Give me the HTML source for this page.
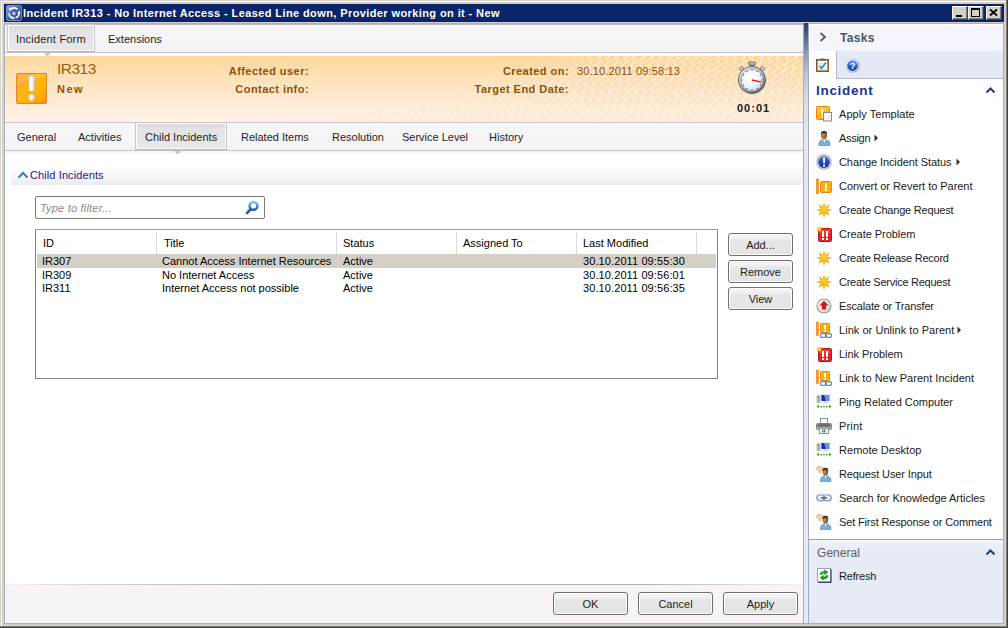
<!DOCTYPE html>
<html><head><meta charset="utf-8">
<style>
*{margin:0;padding:0;box-sizing:border-box}
html,body{width:1008px;height:628px;overflow:hidden;background:#D4D0C8;position:relative;font-family:"Liberation Sans",sans-serif;font-size:11px;color:#000}
.a{position:absolute}
.t{position:absolute;white-space:nowrap;line-height:13px}
.b{font-weight:bold}
.btn{border:1px solid #707070;border-radius:3px;background:linear-gradient(#F6F4F6,#F2F0F2 22%,#E7E7E7 28%,#E4E4E4);box-shadow:inset 0 0 0 1px #fff;text-align:center;line-height:23px;color:#1E1E1E}
</style></head><body>
<!-- window frame -->
<div class="a" style="left:1px;top:1px;width:1005px;height:1px;background:#fff"></div>
<div class="a" style="left:1px;top:1px;width:1px;height:625px;background:#fff"></div>
<div class="a" style="left:0;top:626px;width:1007px;height:1px;background:#808080"></div>
<div class="a" style="left:0;top:627px;width:1008px;height:1px;background:#404040"></div>
<div class="a" style="left:1006px;top:0;width:1px;height:627px;background:#808080"></div>
<div class="a" style="left:1007px;top:0;width:1px;height:628px;background:#404040"></div>

<!-- title bar -->
<div class="a" style="left:4px;top:4px;width:1000px;height:18px;background:#0A246A"></div>
<div class="t b" style="left:23px;top:7px;color:#fff;letter-spacing:0.4px">Incident IR313 - No Internet Access - Leased Line down, Provider working on it - New</div>

<!-- client -->
<div class="a" style="left:4px;top:23px;width:1000px;height:601px;background:#A9B0BC"></div>
<!-- left form -->
<div class="a" style="left:5px;top:24px;width:798px;height:599px;background:#fff"></div>
<!-- tab bar 1 -->
<div class="a" style="left:5px;top:24px;width:798px;height:1px;background:#BDBDC5"></div>
<div class="a" style="left:5px;top:25px;width:798px;height:27px;background:linear-gradient(#F9F9FE,#F6F6F7 3px,#F6F6F6 40%,#F6F2F6)"></div>
<div class="a" style="left:5px;top:52px;width:798px;height:1px;background:#C2C2C8"></div>
<!-- orange header -->
<div class="a" style="left:5px;top:56px;width:798px;height:66px;background:linear-gradient(#FDD89C,#FDDFB0 25%,#FEE6C6 50%,#FEEDD9 75%,#FFF2E6)"></div>
<svg class="a" style="left:5px;top:56px" width="798" height="66" viewBox="0 0 798 66"><defs>
<radialGradient id="mr" gradientUnits="userSpaceOnUse" cx="395" cy="-240" r="700"><stop offset="0.40" stop-color="#fff" stop-opacity="0"/><stop offset="0.45" stop-color="#fff" stop-opacity="1"/><stop offset="1" stop-color="#fff" stop-opacity="1"/></radialGradient>
<linearGradient id="ml" gradientUnits="userSpaceOnUse" x1="280" y1="0" x2="440" y2="0"><stop offset="0" stop-color="#fff" stop-opacity="0"/><stop offset="1" stop-color="#fff" stop-opacity="1"/></linearGradient>
<mask id="mm"><rect width="798" height="66" fill="url(#mr)"/></mask><mask id="mm2"><rect width="798" height="66" fill="url(#ml)"/></mask></defs>
<g mask="url(#mm2)"><rect mask="url(#mm)" width="798" height="66" fill="#F9C080" fill-opacity="0.14"/><path mask="url(#mm)" d="M250.0 66 Q256.0 33 264.0 0 M258.5 66 Q264.5 33 272.5 0 M267.0 66 Q273.0 33 281.0 0 M275.5 66 Q281.5 33 289.5 0 M284.0 66 Q290.0 33 298.0 0 M292.5 66 Q298.5 33 306.5 0 M301.0 66 Q307.0 33 315.0 0 M309.5 66 Q315.5 33 323.5 0 M318.0 66 Q324.0 33 332.0 0 M326.5 66 Q332.5 33 340.5 0 M335.0 66 Q341.0 33 349.0 0 M343.5 66 Q349.5 33 357.5 0 M352.0 66 Q358.0 33 366.0 0 M360.5 66 Q366.5 33 374.5 0 M369.0 66 Q375.0 33 383.0 0 M377.5 66 Q383.5 33 391.5 0 M386.0 66 Q392.0 33 400.0 0 M394.5 66 Q400.5 33 408.5 0 M403.0 66 Q409.0 33 417.0 0 M411.5 66 Q417.5 33 425.5 0 M420.0 66 Q426.0 33 434.0 0 M428.5 66 Q434.5 33 442.5 0 M437.0 66 Q443.0 33 451.0 0 M445.5 66 Q451.5 33 459.5 0 M454.0 66 Q460.0 33 468.0 0 M462.5 66 Q468.5 33 476.5 0 M471.0 66 Q477.0 33 485.0 0 M479.5 66 Q485.5 33 493.5 0 M488.0 66 Q494.0 33 502.0 0 M496.5 66 Q502.5 33 510.5 0 M505.0 66 Q511.0 33 519.0 0 M513.5 66 Q519.5 33 527.5 0 M522.0 66 Q528.0 33 536.0 0 M530.5 66 Q536.5 33 544.5 0 M539.0 66 Q545.0 33 553.0 0 M547.5 66 Q553.5 33 561.5 0 M556.0 66 Q562.0 33 570.0 0 M564.5 66 Q570.5 33 578.5 0 M573.0 66 Q579.0 33 587.0 0 M581.5 66 Q587.5 33 595.5 0 M590.0 66 Q596.0 33 604.0 0 M598.5 66 Q604.5 33 612.5 0 M607.0 66 Q613.0 33 621.0 0 M615.5 66 Q621.5 33 629.5 0 M624.0 66 Q630.0 33 638.0 0 M632.5 66 Q638.5 33 646.5 0 M641.0 66 Q647.0 33 655.0 0 M649.5 66 Q655.5 33 663.5 0 M658.0 66 Q664.0 33 672.0 0 M666.5 66 Q672.5 33 680.5 0 M675.0 66 Q681.0 33 689.0 0 M683.5 66 Q689.5 33 697.5 0 M692.0 66 Q698.0 33 706.0 0 M700.5 66 Q706.5 33 714.5 0 M709.0 66 Q715.0 33 723.0 0 M717.5 66 Q723.5 33 731.5 0 M726.0 66 Q732.0 33 740.0 0 M734.5 66 Q740.5 33 748.5 0 M743.0 66 Q749.0 33 757.0 0 M751.5 66 Q757.5 33 765.5 0 M760.0 66 Q766.0 33 774.0 0 M768.5 66 Q774.5 33 782.5 0 M777.0 66 Q783.0 33 791.0 0 M785.5 66 Q791.5 33 799.5 0 M794.0 66 Q800.0 33 808.0 0 M802.5 66 Q808.5 33 816.5 0 M811.0 66 Q817.0 33 825.0 0 M819.5 66 Q825.5 33 833.5 0 M828.0 66 Q834.0 33 842.0 0 M836.5 66 Q842.5 33 850.5 0 M200.0 66 Q240.0 28 290.0 0 M209.0 66 Q249.0 28 299.0 0 M218.0 66 Q258.0 28 308.0 0 M227.0 66 Q267.0 28 317.0 0 M236.0 66 Q276.0 28 326.0 0 M245.0 66 Q285.0 28 335.0 0 M254.0 66 Q294.0 28 344.0 0 M263.0 66 Q303.0 28 353.0 0 M272.0 66 Q312.0 28 362.0 0 M281.0 66 Q321.0 28 371.0 0 M290.0 66 Q330.0 28 380.0 0 M299.0 66 Q339.0 28 389.0 0 M308.0 66 Q348.0 28 398.0 0 M317.0 66 Q357.0 28 407.0 0 M326.0 66 Q366.0 28 416.0 0 M335.0 66 Q375.0 28 425.0 0 M344.0 66 Q384.0 28 434.0 0 M353.0 66 Q393.0 28 443.0 0 M362.0 66 Q402.0 28 452.0 0 M371.0 66 Q411.0 28 461.0 0 M380.0 66 Q420.0 28 470.0 0 M389.0 66 Q429.0 28 479.0 0 M398.0 66 Q438.0 28 488.0 0 M407.0 66 Q447.0 28 497.0 0 M416.0 66 Q456.0 28 506.0 0 M425.0 66 Q465.0 28 515.0 0 M434.0 66 Q474.0 28 524.0 0 M443.0 66 Q483.0 28 533.0 0 M452.0 66 Q492.0 28 542.0 0 M461.0 66 Q501.0 28 551.0 0 M470.0 66 Q510.0 28 560.0 0 M479.0 66 Q519.0 28 569.0 0 M488.0 66 Q528.0 28 578.0 0 M497.0 66 Q537.0 28 587.0 0 M506.0 66 Q546.0 28 596.0 0 M515.0 66 Q555.0 28 605.0 0 M524.0 66 Q564.0 28 614.0 0 M533.0 66 Q573.0 28 623.0 0 M542.0 66 Q582.0 28 632.0 0 M551.0 66 Q591.0 28 641.0 0 M560.0 66 Q600.0 28 650.0 0 M569.0 66 Q609.0 28 659.0 0 M578.0 66 Q618.0 28 668.0 0 M587.0 66 Q627.0 28 677.0 0 M596.0 66 Q636.0 28 686.0 0 M605.0 66 Q645.0 28 695.0 0 M614.0 66 Q654.0 28 704.0 0 M623.0 66 Q663.0 28 713.0 0 M632.0 66 Q672.0 28 722.0 0 M641.0 66 Q681.0 28 731.0 0 M650.0 66 Q690.0 28 740.0 0 M659.0 66 Q699.0 28 749.0 0 M668.0 66 Q708.0 28 758.0 0 M677.0 66 Q717.0 28 767.0 0 M686.0 66 Q726.0 28 776.0 0 M695.0 66 Q735.0 28 785.0 0 M704.0 66 Q744.0 28 794.0 0 M713.0 66 Q753.0 28 803.0 0 M722.0 66 Q762.0 28 812.0 0 M731.0 66 Q771.0 28 821.0 0 M740.0 66 Q780.0 28 830.0 0 M749.0 66 Q789.0 28 839.0 0 M758.0 66 Q798.0 28 848.0 0 M767.0 66 Q807.0 28 857.0 0 M776.0 66 Q816.0 28 866.0 0 M785.0 66 Q825.0 28 875.0 0 M794.0 66 Q834.0 28 884.0 0 M803.0 66 Q843.0 28 893.0 0 M812.0 66 Q852.0 28 902.0 0 M821.0 66 Q861.0 28 911.0 0 M830.0 66 Q870.0 28 920.0 0 M839.0 66 Q879.0 28 929.0 0 M848.0 66 Q888.0 28 938.0 0 M857.0 66 Q897.0 28 947.0 0 M866.0 66 Q906.0 28 956.0 0 M875.0 66 Q915.0 28 965.0 0 M884.0 66 Q924.0 28 974.0 0 M893.0 66 Q933.0 28 983.0 0 M902.0 66 Q942.0 28 992.0 0 M911.0 66 Q951.0 28 1001.0 0 M920.0 66 Q960.0 28 1010.0 0 M929.0 66 Q969.0 28 1019.0 0 M938.0 66 Q978.0 28 1028.0 0 M947.0 66 Q987.0 28 1037.0 0 M956.0 66 Q996.0 28 1046.0 0 M965.0 66 Q1005.0 28 1055.0 0 M974.0 66 Q1014.0 28 1064.0 0 M983.0 66 Q1023.0 28 1073.0 0 M992.0 66 Q1032.0 28 1082.0 0 M1001.0 66 Q1041.0 28 1091.0 0 M150.0 0 Q180.0 30 205.0 66 M159.0 0 Q189.0 30 214.0 66 M168.0 0 Q198.0 30 223.0 66 M177.0 0 Q207.0 30 232.0 66 M186.0 0 Q216.0 30 241.0 66 M195.0 0 Q225.0 30 250.0 66 M204.0 0 Q234.0 30 259.0 66 M213.0 0 Q243.0 30 268.0 66 M222.0 0 Q252.0 30 277.0 66 M231.0 0 Q261.0 30 286.0 66 M240.0 0 Q270.0 30 295.0 66 M249.0 0 Q279.0 30 304.0 66 M258.0 0 Q288.0 30 313.0 66 M267.0 0 Q297.0 30 322.0 66 M276.0 0 Q306.0 30 331.0 66 M285.0 0 Q315.0 30 340.0 66 M294.0 0 Q324.0 30 349.0 66 M303.0 0 Q333.0 30 358.0 66 M312.0 0 Q342.0 30 367.0 66 M321.0 0 Q351.0 30 376.0 66 M330.0 0 Q360.0 30 385.0 66 M339.0 0 Q369.0 30 394.0 66 M348.0 0 Q378.0 30 403.0 66 M357.0 0 Q387.0 30 412.0 66 M366.0 0 Q396.0 30 421.0 66 M375.0 0 Q405.0 30 430.0 66 M384.0 0 Q414.0 30 439.0 66 M393.0 0 Q423.0 30 448.0 66 M402.0 0 Q432.0 30 457.0 66 M411.0 0 Q441.0 30 466.0 66 M420.0 0 Q450.0 30 475.0 66 M429.0 0 Q459.0 30 484.0 66 M438.0 0 Q468.0 30 493.0 66 M447.0 0 Q477.0 30 502.0 66 M456.0 0 Q486.0 30 511.0 66 M465.0 0 Q495.0 30 520.0 66 M474.0 0 Q504.0 30 529.0 66 M483.0 0 Q513.0 30 538.0 66 M492.0 0 Q522.0 30 547.0 66 M501.0 0 Q531.0 30 556.0 66 M510.0 0 Q540.0 30 565.0 66 M519.0 0 Q549.0 30 574.0 66 M528.0 0 Q558.0 30 583.0 66 M537.0 0 Q567.0 30 592.0 66 M546.0 0 Q576.0 30 601.0 66 M555.0 0 Q585.0 30 610.0 66 M564.0 0 Q594.0 30 619.0 66 M573.0 0 Q603.0 30 628.0 66 M582.0 0 Q612.0 30 637.0 66 M591.0 0 Q621.0 30 646.0 66 M600.0 0 Q630.0 30 655.0 66 M609.0 0 Q639.0 30 664.0 66 M618.0 0 Q648.0 30 673.0 66 M627.0 0 Q657.0 30 682.0 66 M636.0 0 Q666.0 30 691.0 66 M645.0 0 Q675.0 30 700.0 66 M654.0 0 Q684.0 30 709.0 66 M663.0 0 Q693.0 30 718.0 66 M672.0 0 Q702.0 30 727.0 66 M681.0 0 Q711.0 30 736.0 66 M690.0 0 Q720.0 30 745.0 66 M699.0 0 Q729.0 30 754.0 66 M708.0 0 Q738.0 30 763.0 66 M717.0 0 Q747.0 30 772.0 66 M726.0 0 Q756.0 30 781.0 66 M735.0 0 Q765.0 30 790.0 66 M744.0 0 Q774.0 30 799.0 66 M753.0 0 Q783.0 30 808.0 66 M762.0 0 Q792.0 30 817.0 66 M771.0 0 Q801.0 30 826.0 66 M780.0 0 Q810.0 30 835.0 66 M789.0 0 Q819.0 30 844.0 66 M798.0 0 Q828.0 30 853.0 66 M807.0 0 Q837.0 30 862.0 66 M816.0 0 Q846.0 30 871.0 66 M825.0 0 Q855.0 30 880.0 66 M834.0 0 Q864.0 30 889.0 66 M843.0 0 Q873.0 30 898.0 66 M852.0 0 Q882.0 30 907.0 66 M861.0 0 Q891.0 30 916.0 66 M870.0 0 Q900.0 30 925.0 66 M879.0 0 Q909.0 30 934.0 66 M888.0 0 Q918.0 30 943.0 66 M897.0 0 Q927.0 30 952.0 66 M906.0 0 Q936.0 30 961.0 66 M915.0 0 Q945.0 30 970.0 66 M924.0 0 Q954.0 30 979.0 66 M933.0 0 Q963.0 30 988.0 66 M942.0 0 Q972.0 30 997.0 66 M951.0 0 Q981.0 30 1006.0 66" stroke="#fff" stroke-opacity="0.6" stroke-width="0.8" fill="none"/></g></svg>
<div class="a" style="left:5px;top:122px;width:798px;height:1px;background:#C4C4CC"></div>
<!-- tab bar 2 -->
<div class="a" style="left:5px;top:123px;width:798px;height:27px;background:linear-gradient(#F9F9FE,#F6F6F7 3px,#F6F6F6 40%,#F6F2F6)"></div>
<div class="a" style="left:5px;top:150px;width:798px;height:1px;background:#C4C4CC"></div>
<!-- footer -->
<div class="a" style="left:5px;top:584px;width:798px;height:1px;background:linear-gradient(90deg,#F2F0F4,#D8DADE 60px,#AAB0B6 280px,#AAB0B6 630px,#D4D8DC 730px,#EEEEF2)"></div>
<div class="a" style="left:5px;top:585px;width:798px;height:38px;background:#F7F3F7"></div>

<!-- splitter -->
<div class="a" style="left:803px;top:23px;width:6px;height:600px;border-left:1px solid #A4ACBC;border-right:1px solid #A4ACBC;background:linear-gradient(#2C3C60,#4C5E84 12px,#8A9AB8 30px,#B8C4D8 50px,#D6DCEA 75px,#E4E8F6 110px,#E6EAF8)"></div>

<!-- right panel -->
<div class="a" style="left:809px;top:24px;width:194px;height:599px;background:#fff"></div>
<div class="a" style="left:809px;top:24px;width:194px;height:27px;background:#F5F6FD;box-shadow:inset 1px 1px 0 #fff"></div>
<div class="a" style="left:836px;top:51px;width:167px;height:28px;background:#E4E9F5;border-left:1px solid #B4B8C4;border-bottom:1px solid #B4B8C4"></div>
<div class="a" style="left:809px;top:539px;width:194px;height:1px;background:#A0A0A8"></div>
<div class="a" style="left:809px;top:540px;width:194px;height:83px;background:linear-gradient(#F2F4FA,#E8ECF7 8px,#E6EAF5)"></div>


<!-- title icon -->
<svg class="a" style="left:6px;top:5px" width="16" height="16" viewBox="0 0 16 16">
<defs><linearGradient id="tig" x1="0" y1="0" x2="1" y2="1"><stop offset="0" stop-color="#9AB0E4"/><stop offset="0.45" stop-color="#4A62B0"/><stop offset="1" stop-color="#2A3C8A"/></linearGradient></defs>
<rect x="0.5" y="0.5" width="15" height="15" rx="1.5" fill="url(#tig)" stroke="#7088C8"/>
<path d="M4.2 4.6 A5 5 0 0 1 11.6 4.4" stroke="#fff" stroke-width="1.6" fill="none"/>
<path d="M3.2 2.8 L6.4 3.2 L3.6 6.2Z" fill="#fff"/>
<path d="M13 7.2 A5 5 0 0 1 9.6 12.8" stroke="#fff" stroke-width="1.6" fill="none"/>
<path d="M13.8 5.6 L14 9 L11.4 7.4Z" fill="#fff"/>
<path d="M7.4 13 A5 5 0 0 1 3 8.2" stroke="#fff" stroke-width="1.6" fill="none"/>
<path d="M5.6 14 L9 13.6 L6.6 11.2Z" fill="#fff"/>
<circle cx="8" cy="8.4" r="1.6" fill="#B8C8F0"/>
</svg>
<!-- title buttons -->
<div class="a" style="left:952px;top:6px;width:16px;height:14px;background:#D4D0C8;border-top:1px solid #fff;border-left:1px solid #fff;border-right:1px solid #404040;border-bottom:1px solid #404040;box-shadow:inset -1px -1px 0 #808080"></div>
<div class="a" style="left:956px;top:15px;width:6px;height:2px;background:#000"></div>
<div class="a" style="left:968px;top:6px;width:16px;height:14px;background:#D4D0C8;border-top:1px solid #fff;border-left:1px solid #fff;border-right:1px solid #404040;border-bottom:1px solid #404040;box-shadow:inset -1px -1px 0 #808080"></div>
<div class="a" style="left:971px;top:8px;width:9px;height:9px;border:1px solid #000;border-top-width:2px"></div>
<div class="a" style="left:986px;top:6px;width:16px;height:14px;background:#D4D0C8;border-top:1px solid #fff;border-left:1px solid #fff;border-right:1px solid #404040;border-bottom:1px solid #404040;box-shadow:inset -1px -1px 0 #808080"></div>
<svg class="a" style="left:986px;top:6px" width="16" height="14" viewBox="0 0 16 14"><path d="M4 3.5 L11 9.5 M11 3.5 L4 9.5" stroke="#000" stroke-width="1.7"/></svg>

<!-- tab bar 1 -->
<div class="a" style="left:7px;top:24px;width:88px;height:28px;border:1px solid #C6C6CC;border-bottom-color:#B8B8BE;background:linear-gradient(#DADADC,#E3E3E5 25%,#E8E8E8);box-shadow:inset 0 0 0 1px #fff"></div>
<svg class="a" style="left:43px;top:52px" width="9" height="5"><path d="M0 0 L9 0 L4.5 4.5Z" fill="#C4C4CC"/></svg>
<div class="t" style="left:16px;top:33px;color:#1E1E1E;letter-spacing:0.2px">Incident Form</div>
<div class="t" style="left:108px;top:33px;color:#1E1E1E">Extensions</div>

<!-- header content -->
<svg class="a" style="left:16px;top:73px" width="31" height="31" viewBox="0 0 31 31">
<defs><linearGradient id="og" x1="0" y1="0" x2="1" y2="1"><stop offset="0" stop-color="#FF9048"/><stop offset="0.4" stop-color="#FFB414"/><stop offset="0.7" stop-color="#FFB400"/><stop offset="1" stop-color="#FF8C00"/></linearGradient>
<linearGradient id="ex" x1="0" y1="0" x2="1" y2="0"><stop offset="0" stop-color="#D8D8D8"/><stop offset="0.4" stop-color="#FFFFFF"/><stop offset="1" stop-color="#CFCFCF"/></linearGradient></defs>
<rect x="0.5" y="0.5" width="30" height="30" rx="1" fill="url(#og)" stroke="#D8882A"/>
<path d="M1 13 Q12 5 30 4 L30 1 L1 1Z" fill="#FFE080" opacity="0.3"/>
<path d="M12 2.8 L19.2 2.8 L18.2 18.6 L13 18.6Z" fill="url(#ex)" stroke="#C8A060" stroke-width="0.5"/>
<circle cx="15.6" cy="24.4" r="3.4" fill="url(#ex)" stroke="#C8A060" stroke-width="0.5"/>
</svg>
<div class="t" style="left:57px;top:61px;font-size:15.5px;line-height:16px;color:#9A6018;letter-spacing:-0.5px">IR313</div>
<div class="t b" style="left:57px;top:83px;color:#8A5210;letter-spacing:1.5px">New</div>
<div class="t b" style="left:200px;width:109px;text-align:right;top:65px;color:#8A5210;letter-spacing:0.45px">Affected user:</div>
<div class="t b" style="left:200px;width:109px;text-align:right;top:83px;color:#8A5210;letter-spacing:0.45px">Contact info:</div>
<div class="t b" style="left:440px;width:129px;text-align:right;top:65px;color:#8A5210;letter-spacing:0.45px">Created on:</div>
<div class="t b" style="left:440px;width:129px;text-align:right;top:83px;color:#8A5210;letter-spacing:0.45px">Target End Date:</div>
<div class="t" style="left:577px;top:65px;color:#8A5210;letter-spacing:0.15px">30.10.2011 09:58:13</div>
<!-- stopwatch -->
<svg class="a" style="left:736px;top:61px" width="32" height="34" viewBox="0 0 32 34">
<defs><radialGradient id="face" cx="0.35" cy="0.3" r="0.8"><stop offset="0" stop-color="#FFFFFF"/><stop offset="0.6" stop-color="#EEF4FA"/><stop offset="1" stop-color="#C4D6E8"/></radialGradient>
<linearGradient id="ring" x1="0.2" y1="0" x2="0.8" y2="1"><stop offset="0" stop-color="#F4F4F4"/><stop offset="0.5" stop-color="#B0B0B0"/><stop offset="1" stop-color="#5A5A5A"/></linearGradient></defs>
<rect x="14" y="3.5" width="4" height="3" fill="#9A9A9A" stroke="#505050" stroke-width="0.6"/>
<rect x="12.5" y="1" width="7" height="3" rx="1" fill="#B8B8B8" stroke="#505050" stroke-width="0.7"/>
<rect x="3.5" y="6" width="4" height="3" rx="0.8" transform="rotate(-45 5.5 7.5)" fill="#C8C8C8" stroke="#505050" stroke-width="0.6"/>
<rect x="24.5" y="6" width="4" height="3" rx="0.8" transform="rotate(45 26.5 7.5)" fill="#C8C8C8" stroke="#505050" stroke-width="0.6"/>
<circle cx="16" cy="19" r="13.6" fill="url(#ring)" stroke="#4A4A4A" stroke-width="0.8"/>
<circle cx="16" cy="19" r="11.2" fill="url(#face)" stroke="#7A8A98" stroke-width="0.7"/>
<path d="M16.00 9.80 L16.00 8.20 M20.60 11.03 L21.40 9.65 M23.97 14.40 L25.35 13.60 M25.20 19.00 L26.80 19.00 M23.97 23.60 L25.35 24.40 M20.60 26.97 L21.40 28.35 M16.00 28.20 L16.00 29.80 M11.40 26.97 L10.60 28.35 M8.03 23.60 L6.65 24.40 M6.80 19.00 L5.20 19.00 M8.03 14.40 L6.65 13.60 M11.40 11.03 L10.60 9.65" stroke="#5A6A7A" stroke-width="1.1"/>
<path d="M16 19 L25.5 21.2" stroke="#E01818" stroke-width="1.3"/>
</svg>
<div class="t b" style="left:737px;top:102px;color:#202020;letter-spacing:1px">00:01</div>

<!-- tab bar 2 -->
<div class="a" style="left:135px;top:122px;width:92px;height:28px;border:1px solid #C6C6CC;border-bottom-color:#B8B8BE;background:linear-gradient(#DADADC,#E3E3E5 25%,#E8E8E8);box-shadow:inset 0 0 0 1px #fff"></div>
<div class="t" style="left:17px;top:131px;color:#1E1E1E">General</div>
<div class="t" style="left:78px;top:131px;color:#1E1E1E">Activities</div>
<div class="t" style="left:145px;top:131px;color:#1E1E1E">Child Incidents</div>
<div class="t" style="left:241px;top:131px;color:#1E1E1E">Related Items</div>
<div class="t" style="left:332px;top:131px;color:#1E1E1E">Resolution</div>
<div class="t" style="left:402px;top:131px;color:#1E1E1E">Service Level</div>
<div class="t" style="left:489px;top:131px;color:#1E1E1E">History</div>

<!-- section header -->
<div class="a" style="left:5px;top:151px;width:798px;height:3px;background:linear-gradient(#F6F2F6,#F8F6F8 66%,#fff)"></div>
<div class="a" style="left:11px;top:169px;width:792px;height:16px;background:linear-gradient(#FBFAFC,#F5F3F7 70%,#ECEAF0)"></div>
<svg class="a" style="left:17px;top:171px" width="12" height="8"><path d="M1.5 6.5 L6 2 L10.5 6.5" stroke="#3A7DB5" stroke-width="2" fill="none"/></svg>
<div class="t" style="left:30px;top:169px;color:#1A1A88;letter-spacing:0.1px">Child Incidents</div>

<svg class="a" style="left:173px;top:150px" width="9" height="5"><path d="M0 0 L9 0 L4.5 4.5Z" fill="#C4C4CC"/></svg>
<!-- filter -->
<div class="a" style="left:35px;top:196px;width:230px;height:23px;border:1px solid #7A7A7A;border-radius:2px;background:#fff"></div>
<div class="t" style="left:40px;top:202px;color:#8A8A8A;font-style:italic;letter-spacing:0.2px">Type to filter...</div>
<svg class="a" style="left:244px;top:199px" width="16" height="16" viewBox="0 0 16 16">
<defs><linearGradient id="mg" x1="0" y1="0" x2="0" y2="1"><stop offset="0" stop-color="#7CC8F0"/><stop offset="1" stop-color="#2458B4"/></linearGradient></defs>
<path d="M7 10 L3 14" stroke="#2E5CAA" stroke-width="2.6" stroke-linecap="round"/>
<circle cx="9.5" cy="6.9" r="3.9" fill="none" stroke="url(#mg)" stroke-width="2.6"/>
</svg>

<!-- list -->
<div class="a" style="left:35px;top:229px;width:683px;height:150px;border:1px solid #828282;border-top-color:#A0A0A0;border-radius:1px;background:#fff"></div>
<div class="a" style="left:156px;top:232px;width:1px;height:22px;background:#DCDCDC"></div>
<div class="a" style="left:336px;top:232px;width:1px;height:22px;background:#DCDCDC"></div>
<div class="a" style="left:456px;top:232px;width:1px;height:22px;background:#DCDCDC"></div>
<div class="a" style="left:576px;top:232px;width:1px;height:22px;background:#DCDCDC"></div>
<div class="a" style="left:696px;top:232px;width:1px;height:22px;background:#DCDCDC"></div>
<div class="a" style="left:37px;top:254px;width:679px;height:14px;background:#D4D0C8"></div>
<div class="t" style="left:43px;top:237px">ID</div>
<div class="t" style="left:164px;top:237px">Title</div>
<div class="t" style="left:343px;top:237px">Status</div>
<div class="t" style="left:463px;top:237px">Assigned To</div>
<div class="t" style="left:583px;top:237px">Last Modified</div>
<div class="t" style="left:42px;top:255px">IR307</div>
<div class="t" style="left:162px;top:255px">Cannot Access Internet Resources</div>
<div class="t" style="left:343px;top:255px">Active</div>
<div class="t" style="left:583px;top:255px;letter-spacing:0.1px">30.10.2011 09:55:30</div>
<div class="t" style="left:42px;top:269px">IR309</div>
<div class="t" style="left:162px;top:269px">No Internet Access</div>
<div class="t" style="left:343px;top:269px">Active</div>
<div class="t" style="left:583px;top:269px;letter-spacing:0.1px">30.10.2011 09:56:01</div>
<div class="t" style="left:42px;top:282px">IR311</div>
<div class="t" style="left:162px;top:282px">Internet Access not possible</div>
<div class="t" style="left:343px;top:282px">Active</div>
<div class="t" style="left:583px;top:282px;letter-spacing:0.1px">30.10.2011 09:56:35</div>

<!-- side buttons -->
<div class="a btn" style="left:728px;top:233px;width:65px;height:23px">Add...</div>
<div class="a btn" style="left:728px;top:260px;width:65px;height:23px">Remove</div>
<div class="a btn" style="left:728px;top:287px;width:65px;height:23px">View</div>

<!-- footer buttons -->
<div class="a btn" style="left:553px;top:592px;width:75px;height:23px">OK</div>
<div class="a btn" style="left:638px;top:592px;width:75px;height:23px">Cancel</div>
<div class="a btn" style="left:723px;top:592px;width:75px;height:23px">Apply</div>

<!-- right panel content -->
<svg class="a" style="left:819px;top:32px" width="8" height="10"><path d="M1.5 1 L6 5 L1.5 9" stroke="#505A6E" stroke-width="1.8" fill="none"/></svg>
<div class="t b" style="left:840px;top:32px;font-size:12px;color:#4A5468;letter-spacing:0.3px">Tasks</div>

<!-- tasks tabs -->
<svg class="a" style="left:816px;top:58px" width="13" height="14" viewBox="0 0 13 14">
<rect x="0.8" y="1.8" width="11.4" height="11.4" fill="#fff" stroke="#8A5A28" stroke-width="1.6"/>
<rect x="4" y="0.5" width="5" height="2.5" rx="1" fill="#707070"/>
<g stroke="#C8D8E8" stroke-width="0.8"><path d="M2.5 5.5 H10.5 M2.5 7.5 H10.5 M2.5 9.5 H10.5 M2.5 11.5 H10.5"/></g>
<path d="M3.5 8 L5.5 10.5 L10 4.5" stroke="#2A8AD8" stroke-width="1.6" fill="none"/>
</svg>
<svg class="a" style="left:845px;top:58px" width="15" height="15" viewBox="0 0 15 15">
<defs><linearGradient id="hq" x1="0" y1="0" x2="0" y2="1"><stop offset="0" stop-color="#7AA6F4"/><stop offset="0.5" stop-color="#2A62DA"/><stop offset="1" stop-color="#1038B0"/></linearGradient>
<linearGradient id="hr" x1="0" y1="0" x2="1" y2="1"><stop offset="0" stop-color="#E8EEF8"/><stop offset="1" stop-color="#8A9CC0"/></linearGradient></defs>
<circle cx="7.5" cy="7.5" r="7.3" fill="url(#hr)"/>
<circle cx="7.5" cy="7.5" r="6.1" fill="#fff"/>
<circle cx="7.5" cy="7.5" r="5.4" fill="url(#hq)"/>
<text x="7.6" y="11.3" font-family="Liberation Sans" font-weight="bold" font-size="9.5" fill="#fff" text-anchor="middle">?</text>
</svg>
<div class="t b" style="left:816px;top:84px;font-size:13.5px;color:#163592;letter-spacing:0.7px">Incident</div>
<svg class="a" style="left:985px;top:86px" width="11" height="8"><path d="M1.5 6.5 L5.5 2.5 L9.5 6.5" stroke="#1C3A98" stroke-width="2" fill="none"/></svg>
<svg class="a" style="left:816px;top:106px" width="16" height="16" viewBox="0 0 16 16"><rect x="0.5" y="0.5" width="13" height="13" rx="1" fill="#FFB000" stroke="#E08A10"/><path d="M1 1 H13 V5 Q6 4 1 9Z" fill="#FFD060" opacity="0.6"/><rect x="5.6" y="3" width="1.8" height="6" fill="#fff"/><rect x="5.6" y="10" width="1.8" height="1.8" fill="#fff"/><rect x="7.5" y="6.5" width="8" height="8.5" fill="#F2F2F2" stroke="#8A8A8A"/><rect x="8.5" y="7.5" width="6" height="2" fill="#fff"/></svg>
<div class="t" style="left:839px;top:108px;color:#1A1A1A;letter-spacing:0.05px">Apply Template</div>
<svg class="a" style="left:816px;top:130px" width="16" height="16" viewBox="0 0 16 16"><path d="M2.8 15.6 Q2.2 9.6 8.4 9.2 Q14.6 9.6 14 15.6Z" fill="#7AB0DE" stroke="#5A8CC0" stroke-width="0.7"/><path d="M5 11 Q8.4 9.6 12 11 Q8.4 10.5 5 11Z" fill="#B8D8F4"/><path d="M7.2 9.4 L8.4 12.6 L9.6 9.4Z" fill="#fff"/><ellipse cx="8" cy="5.2" rx="3" ry="3.8" fill="#9A5A28"/><ellipse cx="7.3" cy="5.6" rx="1.5" ry="2.2" fill="#C08050"/><path d="M4.9 4.6 Q4.8 0.8 8 1 Q11.2 0.8 11.1 4.6 Q10.4 2.6 8 2.8 Q5.6 2.6 4.9 4.6Z" fill="#2A2A2A"/></svg>
<div class="t" style="left:839px;top:132px;color:#1A1A1A;letter-spacing:-0.3px">Assign</div>
<svg class="a" style="left:874px;top:134px" width="5" height="8"><path d="M0.5 0.5 L4 4 L0.5 7.5Z" fill="#303030"/></svg>
<svg class="a" style="left:816px;top:154px" width="16" height="16" viewBox="0 0 16 16"><defs><linearGradient id="stg" x1="0" y1="0" x2="0" y2="1"><stop offset="0" stop-color="#5A7AE0"/><stop offset="0.5" stop-color="#2446C0"/><stop offset="1" stop-color="#1A2E98"/></linearGradient></defs><circle cx="8" cy="8" r="7.7" fill="#A4A4A8"/><circle cx="8" cy="8" r="6.7" fill="#F4F4F4"/><circle cx="8" cy="8" r="5.9" fill="url(#stg)"/><path d="M7 3.4 H9.1 L8.8 9.6 H7.3Z" fill="#fff"/><rect x="7.05" y="10.7" width="2" height="2" fill="#fff"/></svg>
<div class="t" style="left:839px;top:156px;color:#1A1A1A;letter-spacing:-0.09px">Change Incident Status</div>
<svg class="a" style="left:956px;top:158px" width="5" height="8"><path d="M0.5 0.5 L4 4 L0.5 7.5Z" fill="#303030"/></svg>
<svg class="a" style="left:816px;top:178px" width="16" height="16" viewBox="0 0 16 16"><rect x="0.5" y="1" width="2" height="15" fill="#FF9E10" stroke="#E07A00" stroke-width="0.6"/><rect x="4.5" y="3.5" width="11" height="11" rx="1" fill="#FFB000" stroke="#E08A10"/><rect x="9" y="5.5" width="2" height="5" fill="#fff"/><rect x="9" y="11.3" width="2" height="1.8" fill="#fff"/></svg>
<div class="t" style="left:839px;top:180px;color:#1A1A1A;letter-spacing:-0.04px">Convert or Revert to Parent</div>
<svg class="a" style="left:816px;top:202px" width="16" height="16" viewBox="0 0 16 16"><defs><radialGradient id="sg0" cx="0.5" cy="0.45" r="0.5"><stop offset="0" stop-color="#FFE060"/><stop offset="0.45" stop-color="#FFB400"/><stop offset="1" stop-color="#F08800"/></radialGradient></defs><polygon points="8.00,0.00 9.34,4.77 13.66,2.34 11.23,6.66 16.00,8.00 11.23,9.34 13.66,13.66 9.34,11.23 8.00,16.00 6.66,11.23 2.34,13.66 4.77,9.34 0.00,8.00 4.77,6.66 2.34,2.34 6.66,4.77" fill="url(#sg0)"/></svg>
<div class="t" style="left:839px;top:204px;color:#1A1A1A;letter-spacing:-0.2px">Create Change Request</div>
<svg class="a" style="left:816px;top:226px" width="16" height="16" viewBox="0 0 16 16"><rect x="2.5" y="2.5" width="13" height="13" rx="1" fill="#E02828" stroke="#B01818"/><rect x="3" y="3" width="12" height="5" fill="#F05050" opacity="0.5"/><rect x="6" y="5" width="2" height="6" fill="#fff"/><rect x="6" y="12" width="2" height="2" fill="#fff"/><rect x="10" y="5" width="2" height="6" fill="#fff"/><rect x="10" y="12" width="2" height="2" fill="#fff"/><polygon points="3.20,-0.30 3.81,1.72 5.67,0.73 4.68,2.59 6.70,3.20 4.68,3.81 5.67,5.67 3.81,4.68 3.20,6.70 2.59,4.68 0.73,5.67 1.72,3.81 -0.30,3.20 1.72,2.59 0.73,0.73 2.59,1.72" fill="#FFB814"/><circle cx="3.2" cy="3.2" r="1" fill="#FFE070"/></svg>
<div class="t" style="left:839px;top:228px;color:#1A1A1A;letter-spacing:-0.04px">Create Problem</div>
<svg class="a" style="left:816px;top:250px" width="16" height="16" viewBox="0 0 16 16"><defs><radialGradient id="sg1" cx="0.5" cy="0.45" r="0.5"><stop offset="0" stop-color="#FFE060"/><stop offset="0.45" stop-color="#FFB400"/><stop offset="1" stop-color="#F08800"/></radialGradient></defs><polygon points="8.00,0.00 9.34,4.77 13.66,2.34 11.23,6.66 16.00,8.00 11.23,9.34 13.66,13.66 9.34,11.23 8.00,16.00 6.66,11.23 2.34,13.66 4.77,9.34 0.00,8.00 4.77,6.66 2.34,2.34 6.66,4.77" fill="url(#sg1)"/></svg>
<div class="t" style="left:839px;top:252px;color:#1A1A1A;letter-spacing:-0.25px">Create Release Record</div>
<svg class="a" style="left:816px;top:274px" width="16" height="16" viewBox="0 0 16 16"><defs><radialGradient id="sg2" cx="0.5" cy="0.45" r="0.5"><stop offset="0" stop-color="#FFE060"/><stop offset="0.45" stop-color="#FFB400"/><stop offset="1" stop-color="#F08800"/></radialGradient></defs><polygon points="8.00,0.00 9.34,4.77 13.66,2.34 11.23,6.66 16.00,8.00 11.23,9.34 13.66,13.66 9.34,11.23 8.00,16.00 6.66,11.23 2.34,13.66 4.77,9.34 0.00,8.00 4.77,6.66 2.34,2.34 6.66,4.77" fill="url(#sg2)"/></svg>
<div class="t" style="left:839px;top:276px;color:#1A1A1A;letter-spacing:-0.25px">Create Service Request</div>
<svg class="a" style="left:816px;top:298px" width="16" height="16" viewBox="0 0 16 16"><defs><linearGradient id="eg" x1="0" y1="0" x2="1" y2="1"><stop offset="0" stop-color="#FFFFFF"/><stop offset="1" stop-color="#D0D0D0"/></linearGradient></defs><circle cx="8" cy="8" r="7.6" fill="#9C9C9C"/><circle cx="8" cy="8" r="6.4" fill="url(#eg)"/><path d="M8 2.8 L12.6 7.6 H10.1 V11.6 H5.9 V7.6 H3.4Z" fill="#D01818"/></svg>
<div class="t" style="left:839px;top:300px;color:#1A1A1A;letter-spacing:-0.18px">Escalate or Transfer</div>
<svg class="a" style="left:816px;top:322px" width="16" height="16" viewBox="0 0 16 16"><rect x="0.5" y="0.5" width="2" height="13" fill="#FF9E10" stroke="#E07A00" stroke-width="0.6"/><rect x="4.5" y="1.5" width="9" height="9" rx="1" fill="#FFB000" stroke="#E08A10"/><rect x="8" y="3" width="2" height="4" fill="#fff"/><rect x="8" y="8" width="2" height="1.5" fill="#fff"/><rect x="4.5" y="11.5" width="6" height="4" rx="2" fill="none" stroke="#6A8CB8" stroke-width="1.3"/><rect x="9.5" y="11.5" width="6" height="4" rx="2" fill="none" stroke="#6A8CB8" stroke-width="1.3"/></svg>
<div class="t" style="left:839px;top:324px;color:#1A1A1A;letter-spacing:0.04px">Link or Unlink to Parent</div>
<svg class="a" style="left:957px;top:326px" width="5" height="8"><path d="M0.5 0.5 L4 4 L0.5 7.5Z" fill="#303030"/></svg>
<svg class="a" style="left:816px;top:346px" width="16" height="16" viewBox="0 0 16 16"><rect x="2.5" y="2.5" width="13" height="13" rx="1" fill="#E02828" stroke="#B01818"/><rect x="3" y="3" width="12" height="5" fill="#F05050" opacity="0.5"/><rect x="6" y="5" width="2" height="6" fill="#fff"/><rect x="6" y="12" width="2" height="2" fill="#fff"/><rect x="10" y="5" width="2" height="6" fill="#fff"/><rect x="10" y="12" width="2" height="2" fill="#fff"/><polygon points="3.20,-0.30 3.81,1.72 5.67,0.73 4.68,2.59 6.70,3.20 4.68,3.81 5.67,5.67 3.81,4.68 3.20,6.70 2.59,4.68 0.73,5.67 1.72,3.81 -0.30,3.20 1.72,2.59 0.73,0.73 2.59,1.72" fill="#FFB814"/><circle cx="3.2" cy="3.2" r="1" fill="#FFE070"/></svg>
<div class="t" style="left:839px;top:348px;color:#1A1A1A;letter-spacing:-0.05px">Link Problem</div>
<svg class="a" style="left:816px;top:370px" width="16" height="16" viewBox="0 0 16 16"><rect x="0.5" y="0.5" width="2" height="13" fill="#FF9E10" stroke="#E07A00" stroke-width="0.6"/><rect x="4.5" y="1.5" width="9" height="9" rx="1" fill="#FFB000" stroke="#E08A10"/><rect x="8" y="3" width="2" height="4" fill="#fff"/><rect x="8" y="8" width="2" height="1.5" fill="#fff"/><rect x="4.5" y="11.5" width="6" height="4" rx="2" fill="none" stroke="#6A8CB8" stroke-width="1.3"/><rect x="9.5" y="11.5" width="6" height="4" rx="2" fill="none" stroke="#6A8CB8" stroke-width="1.3"/></svg>
<div class="t" style="left:839px;top:372px;color:#1A1A1A;letter-spacing:0.02px">Link to New Parent Incident</div>
<svg class="a" style="left:816px;top:394px" width="16" height="16" viewBox="0 0 16 16"><rect x="1" y="1.5" width="3" height="7" rx="1" fill="#B8B8B8" stroke="#888" stroke-width="0.5"/><rect x="1.6" y="2.6" width="1.8" height="1" fill="#30C030"/><rect x="4.8" y="0.5" width="9" height="7" fill="#E0E0E0"/><rect x="5.4" y="1" width="7.8" height="6" fill="#1030C0"/><path d="M8 1 L13.2 1 L13.2 7 L10 7Z" fill="#6A90E0"/><rect x="7.5" y="8" width="4" height="1" fill="#C0C0C0"/><path d="M0.5 12.5 L3 10.5 V14.5Z M15.5 12.5 L13 10.5 V14.5Z" fill="#20C020"/><g fill="#20C020"><rect x="4.5" y="12" width="1.5" height="1.5"/><rect x="7.2" y="12" width="1.5" height="1.5"/><rect x="10" y="12" width="1.5" height="1.5"/></g></svg>
<div class="t" style="left:839px;top:396px;color:#1A1A1A;letter-spacing:-0.02px">Ping Related Computer</div>
<svg class="a" style="left:816px;top:418px" width="16" height="16" viewBox="0 0 16 16"><rect x="4.5" y="0.5" width="7" height="5" fill="#fff" stroke="#909090"/><rect x="0.5" y="5.5" width="15" height="6" rx="1" fill="#B8B8B8" stroke="#808080"/><rect x="1.5" y="6" width="13" height="3" fill="#707070"/><rect x="3.5" y="10.5" width="9" height="5" fill="#fff" stroke="#909090"/><rect x="6" y="11.5" width="1.5" height="3" fill="#3080D0"/><rect x="8" y="11.5" width="1.5" height="3" fill="#30A040"/></svg>
<div class="t" style="left:839px;top:420px;color:#1A1A1A;letter-spacing:0.15px">Print</div>
<svg class="a" style="left:816px;top:442px" width="16" height="16" viewBox="0 0 16 16"><rect x="1" y="1.5" width="3" height="7" rx="1" fill="#B8B8B8" stroke="#888" stroke-width="0.5"/><rect x="1.6" y="2.6" width="1.8" height="1" fill="#30C030"/><rect x="4.8" y="0.5" width="9" height="7" fill="#E0E0E0"/><rect x="5.4" y="1" width="7.8" height="6" fill="#1030C0"/><path d="M8 1 L13.2 1 L13.2 7 L10 7Z" fill="#6A90E0"/><rect x="7.5" y="8" width="4" height="1" fill="#C0C0C0"/><path d="M0.5 12.5 L3 10.5 V14.5Z M15.5 12.5 L13 10.5 V14.5Z" fill="#20C020"/><g fill="#20C020"><rect x="4.5" y="12" width="1.5" height="1.5"/><rect x="7.2" y="12" width="1.5" height="1.5"/><rect x="10" y="12" width="1.5" height="1.5"/></g></svg>
<div class="t" style="left:839px;top:444px;color:#1A1A1A;letter-spacing:0.04px">Remote Desktop</div>
<svg class="a" style="left:816px;top:466px" width="16" height="16" viewBox="0 0 16 16"><path d="M0.5 2.5 Q0.5 0.5 4 0.5 Q7.5 0.5 7.5 2.5 Q7.5 4.5 4.5 4.5 L4 7.5 L3 4.5 Q0.5 4.5 0.5 2.5Z" fill="#F6D890" stroke="#C8A050" stroke-width="0.6"/><path d="M4.5 15.6 Q4 10 9.6 9.6 Q15.4 10 15 15.6Z" fill="#7AB0DE" stroke="#5A8CC0" stroke-width="0.7"/><path d="M8.6 9.8 L9.6 12.6 L10.6 9.8Z" fill="#fff"/><ellipse cx="9.4" cy="5.8" rx="2.8" ry="3.6" fill="#9A5A28"/><ellipse cx="8.8" cy="6.2" rx="1.4" ry="2" fill="#C08050"/><path d="M6.5 5.2 Q6.4 1.6 9.4 1.8 Q12.4 1.6 12.3 5.2 Q11.6 3.4 9.4 3.6 Q7.2 3.4 6.5 5.2Z" fill="#2A2A2A"/></svg>
<div class="t" style="left:839px;top:468px;color:#1A1A1A;letter-spacing:-0.12px">Request User Input</div>
<svg class="a" style="left:816px;top:490px" width="16" height="16" viewBox="0 0 16 16"><rect x="1" y="5.2" width="7.6" height="5.4" rx="2.7" fill="none" stroke="#8AA2C4" stroke-width="1.7"/><rect x="7.4" y="5.2" width="7.6" height="5.4" rx="2.7" fill="none" stroke="#8AA2C4" stroke-width="1.7"/><path d="M1.6 6.6 Q4 4.6 7 5.4 M8 5.4 Q11 4.6 14.4 6.6" stroke="#D8E4F4" stroke-width="0.7" fill="none"/><path d="M4.6 7.9 H11.4" stroke="#2A3A60" stroke-width="1.1"/></svg>
<div class="t" style="left:839px;top:492px;color:#1A1A1A;letter-spacing:-0.03px">Search for Knowledge Articles</div>
<svg class="a" style="left:816px;top:514px" width="16" height="16" viewBox="0 0 16 16"><path d="M0.5 2.5 Q0.5 0.5 4 0.5 Q7.5 0.5 7.5 2.5 Q7.5 4.5 4.5 4.5 L4 7.5 L3 4.5 Q0.5 4.5 0.5 2.5Z" fill="#F6D890" stroke="#C8A050" stroke-width="0.6"/><path d="M4.5 15.6 Q4 10 9.6 9.6 Q15.4 10 15 15.6Z" fill="#7AB0DE" stroke="#5A8CC0" stroke-width="0.7"/><path d="M8.6 9.8 L9.6 12.6 L10.6 9.8Z" fill="#fff"/><ellipse cx="9.4" cy="5.8" rx="2.8" ry="3.6" fill="#9A5A28"/><ellipse cx="8.8" cy="6.2" rx="1.4" ry="2" fill="#C08050"/><path d="M6.5 5.2 Q6.4 1.6 9.4 1.8 Q12.4 1.6 12.3 5.2 Q11.6 3.4 9.4 3.6 Q7.2 3.4 6.5 5.2Z" fill="#2A2A2A"/></svg>
<div class="t" style="left:839px;top:516px;color:#1A1A1A;letter-spacing:-0.15px">Set First Response or Comment</div>
<div class="t" style="left:817px;top:547px;font-size:12px;color:#5E5E5E;letter-spacing:0.05px">General</div>
<svg class="a" style="left:985px;top:548px" width="11" height="8"><path d="M1.5 6.5 L5.5 2.5 L9.5 6.5" stroke="#1C3A98" stroke-width="2" fill="none"/></svg>
<svg class="a" style="left:817px;top:568px" width="15" height="15" viewBox="0 0 15 15">
<rect x="0.5" y="0.5" width="13" height="13" fill="#fff" stroke="#A0A0B4"/>
<path d="M14 1 V14.5 H1" stroke="#3A4070" stroke-width="1.2" fill="none"/>
<path d="M2.6 6.6 Q3.2 2.6 7.4 2.8 L7.4 1.2 L11.4 4.2 L7.4 7.2 L7.4 5.4 Q5 5.2 4.6 7Z" fill="#1AA020"/>
<path d="M11.4 7.4 Q10.8 11.4 6.6 11.2 L6.6 12.8 L2.6 9.8 L6.6 6.8 L6.6 8.6 Q9 8.8 9.4 7Z" fill="#1AA020"/>
<path d="M3.2 5.6 Q4 3.6 7 3.6" stroke="#8AE080" stroke-width="0.7" fill="none"/>
</svg>
<div class="t" style="left:839px;top:570px;color:#1A1A1A;letter-spacing:-0.2px">Refresh</div>
</body></html>
